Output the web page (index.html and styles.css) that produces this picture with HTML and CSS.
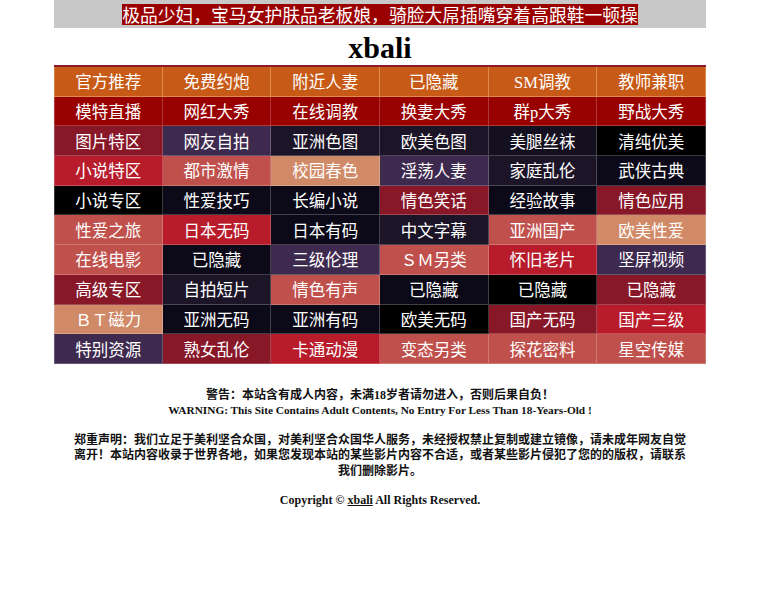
FILE: index.html
```html
<!DOCTYPE html>
<html lang="zh-CN">
<head>
<meta charset="utf-8">
<title>xbali</title>
<link rel="stylesheet" href="styles.css">
</head>
<body>
<div class="wrap">
  <div class="banner"><span class="banner-text">极品少妇，宝马女护肤品老板娘，骑脸大屌插嘴穿着高跟鞋一顿操</span></div>
  <h1 class="title">xbali</h1>
  <div class="grid">
    <a class="c orange">官方推荐</a><a class="c orange">免费约炮</a><a class="c orange">附近人妻</a><a class="c orange">已隐藏</a><a class="c orange">SM调教</a><a class="c orange">教师兼职</a>
    <a class="c dred">模特直播</a><a class="c dred">网红大秀</a><a class="c dred">在线调教</a><a class="c dred">换妻大秀</a><a class="c dred">群p大秀</a><a class="c dred">野战大秀</a>
    <a class="c maroon">图片特区</a><a class="c purple">网友自拍</a><a class="c navy">亚洲色图</a><a class="c navy">欧美色图</a><a class="c navy2">美腿丝袜</a><a class="c black">清纯优美</a>
    <a class="c red">小说特区</a><a class="c salmon">都市激情</a><a class="c tan">校园春色</a><a class="c purple">淫荡人妻</a><a class="c navy">家庭乱伦</a><a class="c ink">武侠古典</a>
    <a class="c black">小说专区</a><a class="c ink">性爱技巧</a><a class="c ink">长编小说</a><a class="c maroon">情色笑话</a><a class="c ink">经验故事</a><a class="c maroon">情色应用</a>
    <a class="c salmon">性爱之旅</a><a class="c red">日本无码</a><a class="c ink">日本有码</a><a class="c navy">中文字幕</a><a class="c salmon">亚洲国产</a><a class="c tan">欧美性爱</a>
    <a class="c salmon">在线电影</a><a class="c ink">已隐藏</a><a class="c purple">三级伦理</a><a class="c salmon">ＳＭ另类</a><a class="c red">怀旧老片</a><a class="c purple">坚屏视频</a>
    <a class="c maroon">高级专区</a><a class="c navy">自拍短片</a><a class="c salmon">情色有声</a><a class="c ink">已隐藏</a><a class="c black">已隐藏</a><a class="c maroon">已隐藏</a>
    <a class="c tan">ＢＴ磁力</a><a class="c ink">亚洲无码</a><a class="c ink">亚洲有码</a><a class="c black">欧美无码</a><a class="c maroon">国产无码</a><a class="c red">国产三级</a>
    <a class="c purple">特别资源</a><a class="c maroon">熟女乱伦</a><a class="c red">卡通动漫</a><a class="c salmon">变态另类</a><a class="c salmon">探花密料</a><a class="c salmon">星空传媒</a>
  </div>
  <div class="footer">
    <p class="warn">警告：本站含有成人内容，未满18岁者请勿进入，否则后果自负！<br><span class="warn-en">WARNING: This Site Contains Adult Contents, No Entry For Less Than 18-Years-Old !</span></p>
    <p class="notice">郑重声明：我们立足于美利坚合众国，对美利坚合众国华人服务，未经授权禁止复制或建立镜像，请未成年网友自觉离开！本站内容收录于世界各地，如果您发现本站的某些影片内容不合适，或者某些影片侵犯了您的的版权，请联系我们删除影片。</p>
    <p class="copy">Copyright © <a class="copy-link">xbali</a> All Rights Reserved.</p>
  </div>
</div>
</body>
</html>
```
FILE: styles.css
```css
html, body {
  margin: 0;
  padding: 0;
  background: #fff;
}
.wrap {
  width: 652px;
  margin: 0 auto;
  font-family: "Liberation Serif", "Noto Sans CJK SC", serif;
}
.banner {
  background: #c8c8c8;
  height: 28px;
  text-align: center;
  display: flex;
  align-items: center;
  justify-content: center;
}
.banner-text {
  background: #9b0000;
  color: #fff;
  font-family: "Noto Sans CJK TC", "Noto Sans CJK SC", sans-serif;
  font-size: 17.8px;
  line-height: 21px;
  display: inline-block;
}
.title {
  margin: 0;
  height: 37px;
  line-height: 40px;
  text-align: center;
  font-size: 30px;
  font-weight: bold;
  color: #000;
}
.grid {
  display: grid;
  grid-template-columns: repeat(6, 1fr);
  grid-auto-rows: 29.7px;
  border-top: 2px solid #8b1a2a;
}
.c {
  display: flex;
  align-items: center;
  justify-content: center;
  color: #fff;
  font-size: 16.5px;
  text-decoration: none;
  border-right: 1px solid rgba(255,255,255,0.22);
  border-bottom: 1px solid rgba(255,255,255,0.22);
  box-sizing: border-box;
}
.c:nth-child(6n+1) {
  border-left: 1px solid rgba(255,255,255,0.22);
}
.orange { background: #c85a17; border-color: rgba(255,200,140,0.45); }
.dred { background: #990000; }
.maroon { background: #881728; }
.purple { background: #3f2a4f; }
.navy { background: #1c1528; }
.navy2 { background: #141020; }
.ink { background: #0c0918; }
.black { background: #000; }
.red { background: #b81c2b; }
.salmon { background: #c0504b; }
.tan { background: #d08a68; }
.footer {
  width: 622px;
  margin: 0 auto;
  text-align: center;
  font-family: "Liberation Serif", "Noto Sans CJK TC", "Noto Sans CJK SC", serif;
  font-weight: bold;
  font-size: 12px;
  line-height: 15.5px;
  color: #111;
}
.footer p {
  margin: 0;
}
.warn {
  padding-top: 24px;
}
.warn-en {
  font-size: 11.3px;
}
.notice {
  padding-top: 14px;
}
.copy {
  padding-top: 14px;
}
.copy-link {
  color: #111;
  text-decoration: underline;
}
```
